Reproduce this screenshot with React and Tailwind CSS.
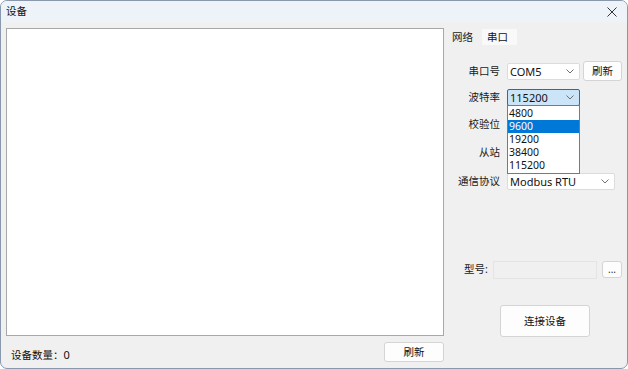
import React from 'react'

const font = { fontFamily: "'Noto Sans', 'Noto Sans CJK SC', sans-serif" }

function Chevron() {
  return (
    <svg width="8" height="5" viewBox="0 0 8 5" className="shrink-0">
      <path d="M0.5 0.5 L4 4 L7.5 0.5" fill="none" stroke="#707070" strokeWidth="1" />
    </svg>
  )
}

function Combo({ value, width, active }) {
  return (
    <div
      className={
        'h-[17px] flex items-center justify-between pl-[2px] pr-[5px] rounded-[2px] border ' +
        (active ? 'bg-[#cce4f7] border-[#0078d7]' : 'bg-white border-[#dcdcdc]')
      }
      style={{ width }}
    >
      <span className="text-[11px] leading-none text-[#111]">{value}</span>
      <Chevron />
    </div>
  )
}

function Label({ children }) {
  return <div className="w-[52px] whitespace-nowrap text-right text-[10.5px] leading-none text-[#1a1a1a]">{children}</div>
}

export default function App() {
  const items = ['4800', '9600', '19200', '38400', '115200']
  return (
    <div className="w-[628px] h-[369px] bg-[#f0f0f0] border border-[#8a98ad] rounded-[7px] flex flex-col overflow-hidden" style={font}>
      <div className="h-[21px] bg-[#eef3f9] flex items-center justify-between pl-[5px] pr-[10px] shrink-0">
        <span className="text-[10.5px] leading-none text-[#111]">设备</span>
        <svg width="10" height="10" viewBox="0 0 10 10">
          <path d="M0.5 0.5 L9.5 9.5 M9.5 0.5 L0.5 9.5" stroke="#333" strokeWidth="1" />
        </svg>
      </div>
      <div className="flex-1 flex">
        <div className="ml-[5px] w-[438px] flex flex-col">
          <div className="mt-[6px] h-[308px] bg-white border border-[#a8a8a8]" />
          <div className="flex items-center justify-between mt-[6px]">
            <span className="ml-[5px] mt-[5px] text-[10.5px] leading-none text-[#111] whitespace-nowrap">设备数量：<span className="text-[11px]">0</span></span>
            <button className="w-[60px] h-[20px] bg-[#fdfdfd] border border-[#d4d4d4] rounded-[3px] text-[10.5px] leading-none text-[#111]">刷新</button>
          </div>
        </div>
        <div className="flex-1 flex flex-col pl-[4px]">
          <div className="mt-[7px] flex items-center h-[16px]">
            <span className="ml-[4px] text-[10.5px] leading-none text-[#1a1a1a]">网络</span>
            <span className="ml-[9px] h-[16px] w-[35px] bg-[#f9f9f9] flex items-center pl-[5px] text-[10.5px] leading-none text-[#111]">串口</span>
          </div>
          <div className="mt-[16px] h-[20px] flex items-center gap-[7px]">
            <Label>串口号</Label>
            <Combo value="COM5" width={73} />
            <button className="ml-[-4px] w-[39px] h-[20px] bg-[#fdfdfd] border border-[#d4d4d4] rounded-[3px] text-[10.5px] leading-none text-[#111]">刷新</button>
          </div>
          <div className="mt-[6px] h-[20px] flex items-center gap-[7px] relative">
            <Label>波特率</Label>
            <Combo value="115200" width={73} active />
            <div className="absolute left-[59px] top-[18px] w-[73px] bg-white border border-[#5b7fae] z-10 flex flex-col py-[1px]">
              {items.map(it => (
                <div
                  key={it}
                  className={
                    'h-[13px] pl-[1px] flex items-center text-[10.5px] leading-[13px] ' +
                    (it === '9600' ? 'bg-[#0078d7] text-white' : 'text-[#111]')
                  }
                >
                  {it}
                </div>
              ))}
            </div>
          </div>
          <div className="mt-[7px] h-[20px] flex items-center">
            <Label>校验位</Label>
          </div>
          <div className="mt-[8px] h-[20px] flex items-center">
            <Label>从站</Label>
          </div>
          <div className="mt-[9px] h-[20px] flex items-center gap-[7px]">
            <Label>通信协议</Label>
            <Combo value="Modbus RTU" width={108} />
          </div>
          <div className="mt-[69px] h-[19px] flex items-center">
            <span className="ml-[16px] w-[29px] whitespace-nowrap text-[10.5px] leading-none text-[#1a1a1a]">型号:</span>
            <div className="w-[104px] h-[18px] border border-[#e4e4e4] bg-[#f0f0f0]" />
            <button className="ml-[5px] w-[20px] h-[17px] bg-[#fdfdfd] border border-[#d4d4d4] rounded-[3px] text-[10px] leading-none text-[#333] pb-[2px]">...</button>
          </div>
          <div className="mt-[26px] flex">
            <button className="ml-[52px] w-[90px] h-[32px] bg-[#fdfdfd] border border-[#d4d4d4] rounded-[3px] text-[10.5px] leading-none text-[#111]">连接设备</button>
          </div>
        </div>
      </div>
    </div>
  )
}
